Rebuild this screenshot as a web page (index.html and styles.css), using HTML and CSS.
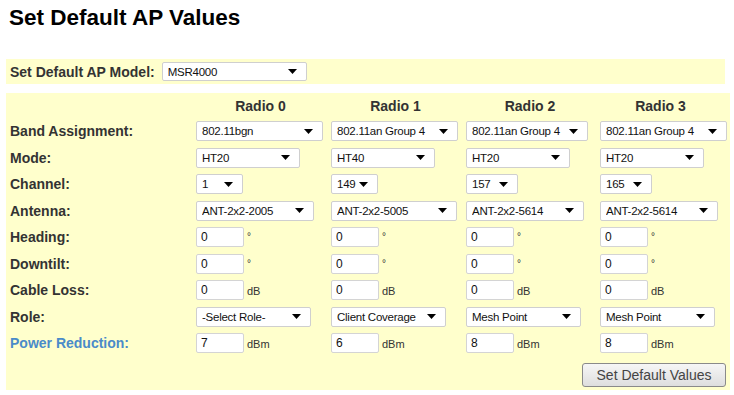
FILE: index.html
```html
<!DOCTYPE html>
<html lang="en">
<head>
  <meta charset="UTF-8">
  <title>Set Default AP Values</title>
  <link rel="stylesheet" href="styles.css">
</head>
<body>
  <h1 class="titulo">Set Default AP Values</h1>

  <div class="barra-modelo">
    <label for="modelo">Set Default AP Model:</label>
    <select id="modelo" class="sel sel-modelo">
      <option>MSR4000</option>
    </select>
  </div>

  <div class="painel">
    <div class="grade">
      <div></div>
      <div class="radio-titulo">Radio 0</div>
      <div class="radio-titulo">Radio 1</div>
      <div class="radio-titulo">Radio 2</div>
      <div class="radio-titulo">Radio 3</div>

      <div class="rotulo">Band Assignment:</div>
      <div class="celula"><select class="sel sel-band"><option>802.11bgn</option></select></div>
      <div class="celula"><select class="sel sel-band"><option>802.11an Group 4</option></select></div>
      <div class="celula"><select class="sel sel-band curto"><option>802.11an Group 4</option></select></div>
      <div class="celula"><select class="sel sel-band"><option>802.11an Group 4</option></select></div>

      <div class="rotulo">Mode:</div>
      <div class="celula"><select class="sel sel-mode"><option>HT20</option></select></div>
      <div class="celula"><select class="sel sel-mode"><option>HT40</option></select></div>
      <div class="celula"><select class="sel sel-mode"><option>HT20</option></select></div>
      <div class="celula"><select class="sel sel-mode"><option>HT20</option></select></div>

      <div class="rotulo">Channel:</div>
      <div class="celula"><select class="sel sel-chan"><option>1</option></select></div>
      <div class="celula"><select class="sel sel-chan"><option>149</option></select></div>
      <div class="celula"><select class="sel sel-chan largo"><option>157</option></select></div>
      <div class="celula"><select class="sel sel-chan largo"><option>165</option></select></div>

      <div class="rotulo">Antenna:</div>
      <div class="celula"><select class="sel sel-ant"><option>ANT-2x2-2005</option></select></div>
      <div class="celula"><select class="sel sel-ant largo"><option>ANT-2x2-5005</option></select></div>
      <div class="celula"><select class="sel sel-ant"><option>ANT-2x2-5614</option></select></div>
      <div class="celula"><select class="sel sel-ant"><option>ANT-2x2-5614</option></select></div>

      <div class="rotulo">Heading:</div>
      <div class="celula"><input class="campo" type="text" value="0"><span class="grau">°</span></div>
      <div class="celula"><input class="campo" type="text" value="0"><span class="grau">°</span></div>
      <div class="celula"><input class="campo" type="text" value="0"><span class="grau">°</span></div>
      <div class="celula"><input class="campo" type="text" value="0"><span class="grau">°</span></div>

      <div class="rotulo">Downtilt:</div>
      <div class="celula"><input class="campo" type="text" value="0"><span class="grau">°</span></div>
      <div class="celula"><input class="campo" type="text" value="0"><span class="grau">°</span></div>
      <div class="celula"><input class="campo" type="text" value="0"><span class="grau">°</span></div>
      <div class="celula"><input class="campo" type="text" value="0"><span class="grau">°</span></div>

      <div class="rotulo">Cable Loss:</div>
      <div class="celula"><input class="campo" type="text" value="0"><span class="unidade">dB</span></div>
      <div class="celula"><input class="campo" type="text" value="0"><span class="unidade">dB</span></div>
      <div class="celula"><input class="campo" type="text" value="0"><span class="unidade">dB</span></div>
      <div class="celula"><input class="campo" type="text" value="0"><span class="unidade">dB</span></div>

      <div class="rotulo">Role:</div>
      <div class="celula"><select class="sel sel-role"><option>-Select Role-</option></select></div>
      <div class="celula"><select class="sel sel-role"><option>Client Coverage</option></select></div>
      <div class="celula"><select class="sel sel-role"><option>Mesh Point</option></select></div>
      <div class="celula"><select class="sel sel-role"><option>Mesh Point</option></select></div>

      <div class="rotulo rotulo-link">Power Reduction:</div>
      <div class="celula"><input class="campo" type="text" value="7"><span class="unidade">dBm</span></div>
      <div class="celula"><input class="campo" type="text" value="6"><span class="unidade">dBm</span></div>
      <div class="celula"><input class="campo" type="text" value="8"><span class="unidade">dBm</span></div>
      <div class="celula"><input class="campo" type="text" value="8"><span class="unidade">dBm</span></div>
    </div>

    <div class="acoes">
      <button class="btn">Set Default Values</button>
    </div>
  </div>
</body>
</html>
```

FILE: styles.css
```css
body {
  margin: 0;
  font-family: "Liberation Sans", Arial, sans-serif;
  color: #333;
  background-color: #fff;
}

.titulo {
  margin: 0;
  padding: 5px 0 0 9px;
  font-size: 22.5px;
  line-height: 26px;
  font-weight: bold;
  color: #000;
}

.barra-modelo {
  display: flex;
  align-items: center;
  gap: 7px;
  width: 715px;
  height: 25px;
  margin: 28px 0 0 6px;
  padding-left: 4px;
  background-color: #ffffcc;
  font-size: 14px;
  font-weight: bold;
}

.painel {
  width: 716px;
  margin: 9px 0 0 6px;
  padding: 0 4px 3px 4px;
  background-color: #ffffcc;
}

.grade {
  display: grid;
  grid-template-columns: 186px 135px 135px 134px 1fr;
  grid-template-rows: 25px;
  grid-auto-rows: 26.5px;
  align-items: center;
}

.radio-titulo {
  text-align: center;
  padding-right: 6px;
  font-size: 14px;
  font-weight: bold;
}

.rotulo {
  font-size: 14px;
  font-weight: bold;
}

.rotulo-link {
  color: #4a8bc9;
}

.celula {
  display: flex;
  align-items: center;
  gap: 3px;
}

.sel {
  appearance: none;
  -webkit-appearance: none;
  height: 20px;
  margin: 0;
  padding: 0 0 0 5px;
  border: 1px solid #cfcfcf;
  border-radius: 2px;
  background: #fff url("data:image/svg+xml;utf8,<svg xmlns='http://www.w3.org/2000/svg' width='9' height='5'><path d='M0 0h9L4.5 5z' fill='black'/></svg>") no-repeat right 9px center;
  font-family: "Liberation Sans", Arial, sans-serif;
  font-size: 11.5px;
  letter-spacing: -0.25px;
  color: #111;
}

.sel-modelo { width: 145px; height: 19px; }
.sel-band { width: 127px; }
.sel-band.curto { width: 122px; }
.sel-mode { width: 104px; }
.sel-chan { width: 47px; }
.sel-chan.largo { width: 52px; }
.sel-ant { width: 118px; }
.sel-ant.largo { width: 126px; }
.sel-role { width: 115px; }

.campo {
  width: 48px;
  height: 20px;
  box-sizing: border-box;
  margin: 0;
  padding: 0 0 0 4px;
  border: 1px solid #d4d4d4;
  border-radius: 2px;
  background: #fff;
  font-family: "Liberation Sans", Arial, sans-serif;
  font-size: 12px;
  color: #111;
}

.unidade {
  font-size: 11px;
  padding-top: 2px;
}

.grau {
  font-size: 10px;
  align-self: flex-start;
  margin-top: 4px;
}

.acoes {
  display: flex;
  justify-content: flex-end;
  padding-top: 6.5px;
}

.btn {
  width: 144px;
  height: 24px;
  padding: 0;
  border: 1px solid #8a8a8a;
  border-radius: 3px;
  background: linear-gradient(#f6f6f6, #dedede);
  font-family: "Liberation Sans", Arial, sans-serif;
  font-size: 14px;
  color: #444;
  cursor: pointer;
}
```
